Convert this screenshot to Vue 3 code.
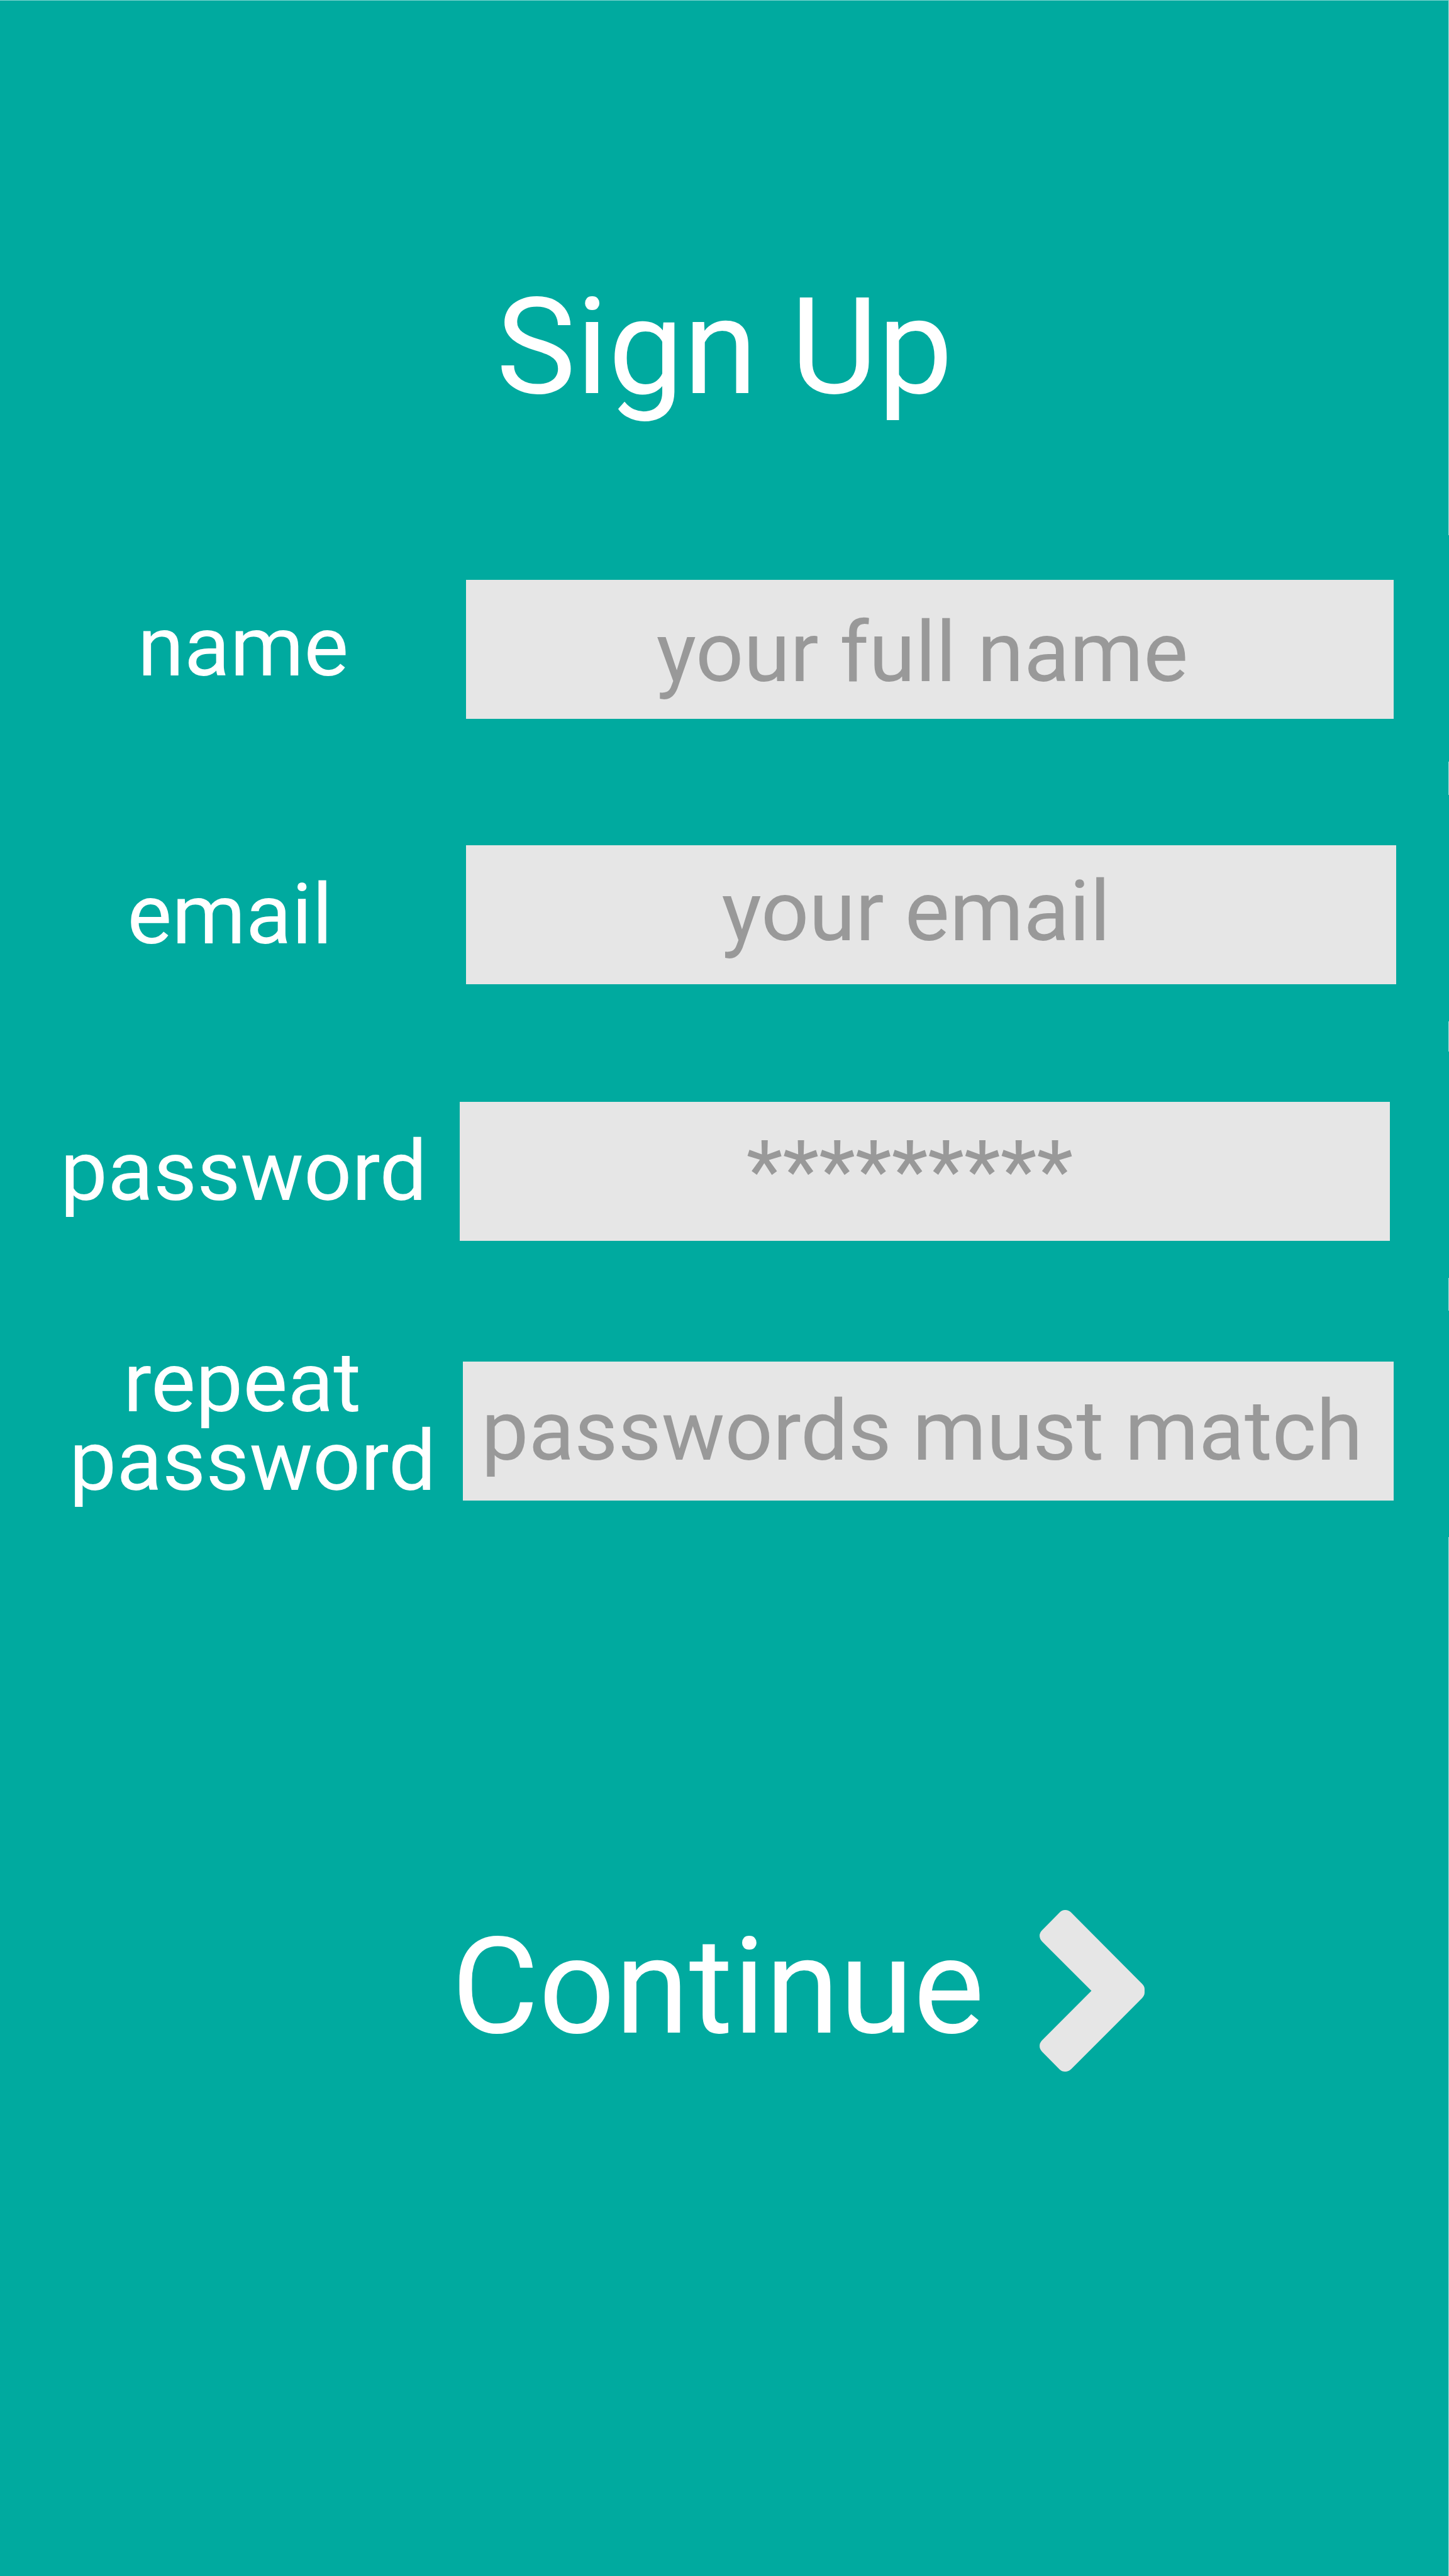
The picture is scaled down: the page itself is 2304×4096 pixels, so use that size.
<script setup>
import { reactive } from 'vue'

const fields = [
  { id: 'name', label: 'name', type: 'text', placeholder: 'your full name' },
  { id: 'email', label: 'email', type: 'email', placeholder: 'your email' },
  { id: 'password', label: 'password', type: 'password', placeholder: '*********' },
  { id: 'repeat', label: 'repeat\n password', type: 'password', placeholder: 'passwords must match' },
]

const form = reactive({ name: '', email: '', password: '', repeat: '' })
</script>

<template>
  <main class="page">
    <h1 class="title">Sign Up</h1>
    <form class="form" @submit.prevent>
      <div v-for="field in fields" :key="field.id" class="row" :class="`row-${field.id}`">
        <label class="label" :for="field.id">{{ field.label }}</label>
        <input
          :id="field.id"
          v-model="form[field.id]"
          class="field"
          :type="field.type"
          :placeholder="field.placeholder"
        />
      </div>
      <button class="continue" type="submit">
        <span class="continue-text">Continue</span>
        <svg class="chevron" viewBox="0 0 652 1004" aria-hidden="true">
          <path
            d="M124 16 Q138 0 159 0 Q180 0 196 16 L637 459 Q652 474 652 490 V514 Q652 530 637 547 L196 988 Q180 1004 159 1004 Q138 1004 124 990 L15 880 Q0 864 0 845 Q0 826 15 810 L322 502 L15 195 Q0 179 0 160 Q0 141 15 126 Z"
          />
        </svg>
      </button>
    </form>
  </main>
</template>

<style>
body {
  margin: 0;
  background: #00aa9f;
}
</style>

<style scoped>
/* The hairline on the right edge is broken beside each form row. */
.page {
  box-sizing: border-box;
  min-height: 100vh;
  padding-top: 426px;
  border-top: 1px solid #80d4cf;
  background:
    linear-gradient(
      #a6e0dc 850px,
      #00aa9f 850px 1210px,
      #a6e0dc 1210px 1263px,
      #00aa9f 1263px 1623px,
      #a6e0dc 1623px 1671px,
      #00aa9f 1671px 2031px,
      #a6e0dc 2031px 2083px,
      #00aa9f 2083px 2443px,
      #a6e0dc 2443px
    ) right top / 1px 100% no-repeat,
    #00aa9f;
  color: #fff;
  font-family: Roboto, "Liberation Sans", sans-serif;
}

.title {
  margin: 0;
  font-size: 213px;
  font-weight: 400;
  line-height: 250px;
  text-align: center;
}

.form {
  display: flex;
  flex-direction: column;
  margin-top: 245px;
}

.row {
  display: grid;
  grid-template-columns: 741px 1fr;
  align-items: end;
  padding-right: 88px;
}

.label {
  box-sizing: border-box;
  font-size: 134px;
  line-height: 125px;
  text-align: center;
  white-space: pre;
}

.field {
  box-sizing: border-box;
  width: 100%;
  min-width: 0;
  height: 221px;
  margin: 0;
  padding: 0;
  border: 0;
  border-radius: 0;
  background: #e6e6e6;
  color: #333;
  font-family: inherit;
  font-size: 134px;
  text-align: center;
}

.field::placeholder {
  color: #999;
  opacity: 1;
}

.row-name .label {
  padding: 0 0 52px 32px;
}

.row-name .field {
  padding: 10px 24px 0 0;
}

.row-email {
  margin-top: 201px;
  padding-right: 84px;
}

.row-email .label {
  padding: 0 10px 48px 0;
}

.row-email .field {
  padding: 0 48px 10px 0;
}

.row-password {
  grid-template-columns: 731px 1fr;
  margin-top: 187px;
  padding-right: 94px;
}

.row-password .label {
  padding: 0 0 48px 44px;
}

.row-password .field {
  padding: 0 48px 0 0;
}

.row-repeat {
  grid-template-columns: 736px 1fr;
  margin-top: 163px;
}

.row-repeat .label {
  padding-left: 34px;
}

.row-repeat .field {
  padding: 0 20px 0 0;
}

.continue {
  display: flex;
  align-items: center;
  align-self: center;
  gap: 88px;
  margin: 648px 0 0 234px;
  padding: 0;
  border: 0;
  background: none;
  color: inherit;
  font-family: inherit;
  font-size: 213px;
  line-height: 250px;
}

.continue-text {
  padding-bottom: 12px;
}

.chevron {
  width: 167px;
  height: 257px;
  fill: #e6e6e6;
}
</style>
